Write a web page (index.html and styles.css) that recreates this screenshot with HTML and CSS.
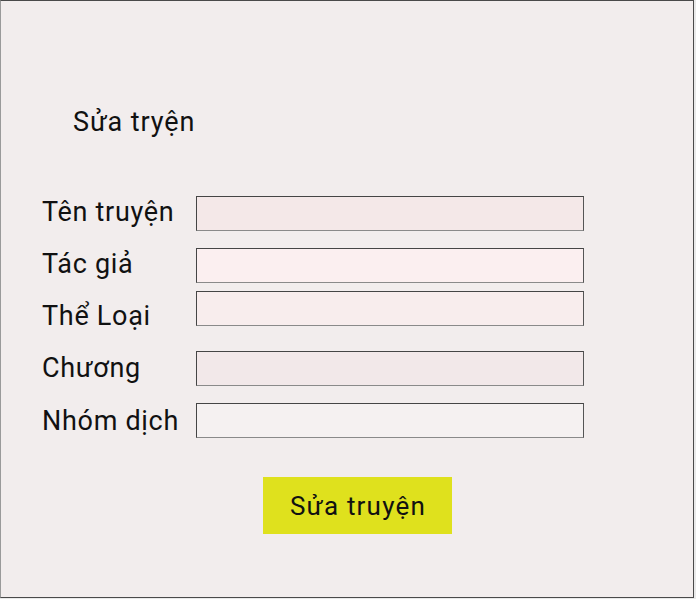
FILE: index.html
```html
<!DOCTYPE html>
<html lang="vi">
<head>
<meta charset="utf-8">
<title>Sửa truyện</title>
<link rel="stylesheet" href="styles.css">
</head>
<body>
<div class="frame">
  <h1 class="title">Sửa tryện</h1>
  <form class="form">
    <div class="row">
      <label class="label label-a">Tên truyện</label>
      <input class="field field-1" type="text">
    </div>
    <div class="row row-gap-17">
      <label class="label label-b">Tác giả</label>
      <input class="field field-2" type="text">
    </div>
    <div class="row row-gap-8">
      <label class="label label-c">Thể Loại</label>
      <input class="field field-3" type="text">
    </div>
    <div class="row row-gap-25">
      <label class="label label-d">Chương</label>
      <input class="field field-4" type="text">
    </div>
    <div class="row row-gap-17">
      <label class="label label-e">Nhóm dịch</label>
      <input class="field field-5" type="text">
    </div>
    <div class="actions">
      <button class="btn" type="button">Sửa truyện</button>
    </div>
  </form>
</div>
</body>
</html>
```

FILE: styles.css
```css
html, body {
  margin: 0;
  padding: 0;
  background: #e9e9e9;
  width: 696px;
  height: 599px;
  overflow: hidden;
}

.frame {
  box-sizing: border-box;
  width: 694px;
  height: 598px;
  background: #f2eded;
  border: 1px solid #4a4a4a;
  border-left-color: #9a9a9a;
  padding: 0 0 0 41px;
  font-family: Roboto, "Noto Sans", sans-serif;
  color: #111;
}

.title {
  margin: 106px 0 0 31px;
  font-size: 27px;
  font-weight: 400;
  line-height: 30px;
  letter-spacing: 0.9px;
}

.form {
  margin-top: 59px;
}

.row {
  display: flex;
  align-items: flex-start;
  height: 35px;
}

.row-gap-17 { margin-top: 17px; }
.row-gap-8 { margin-top: 8px; }
.row-gap-25 { margin-top: 25px; }

.label {
  width: 154px;
  font-size: 27px;
  line-height: 28px;
  letter-spacing: 0.7px;
  white-space: nowrap;
}

.label-a { margin-top: 2px; }
.label-b { margin-top: 2px; }
.label-c { margin-top: 11px; }
.label-d { margin-top: 3px; }
.label-e { margin-top: 4px; }

.field {
  box-sizing: border-box;
  width: 388px;
  height: 35px;
  margin: 0;
  padding: 0 6px;
  border: 1px solid #454545;
  border-bottom-color: #8a8a8a;
  border-right-color: #555;
  font-family: inherit;
  font-size: 16px;
  outline: none;
}

.field-1 { background: #f4e8e8; }
.field-2 { background: #fbeff0; }
.field-3 { background: #f8eded; }
.field-4 { background: #f2e8e9; }
.field-5 { background: #f5f1f1; }

.actions {
  display: flex;
  margin-top: 39px;
  padding-left: 221px;
}

.btn {
  width: 189px;
  height: 57px;
  border: none;
  background: #dfe11d;
  font-family: inherit;
  font-size: 26px;
  letter-spacing: 1.2px;
  color: #111;
  padding: 0 0 0 1px;
}
```
